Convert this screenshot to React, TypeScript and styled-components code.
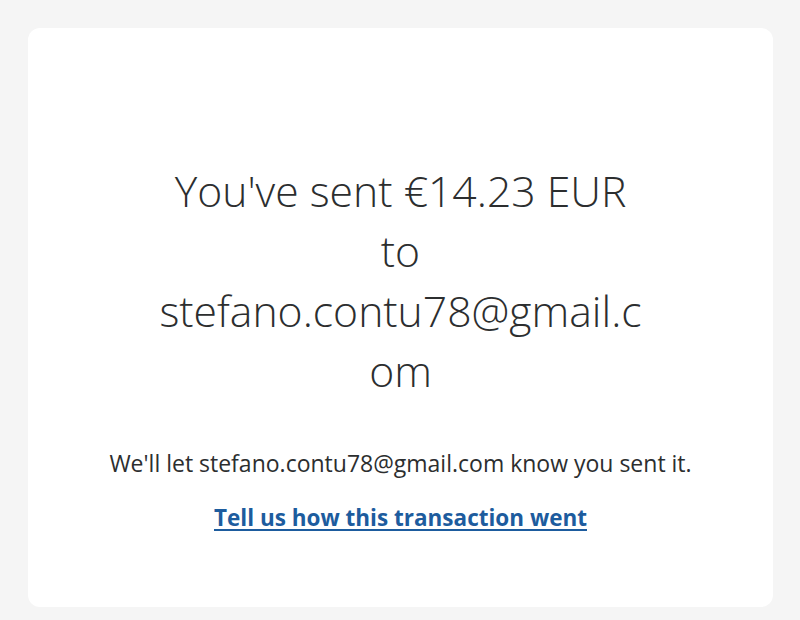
import React from 'react';
import styled, { createGlobalStyle } from 'styled-components';

const GlobalStyle = createGlobalStyle`
  html, body {
    margin: 0;
    padding: 0;
    background: #f5f5f5;
  }
  body {
    font-family: 'Open Sans', 'Noto Sans', sans-serif;
    color: #2c2e2f;
  }
`;

const Page = styled.div`
  padding: 28px 27px 13px 28px;
`;

const Card = styled.div`
  background: #ffffff;
  border-radius: 12px;
  height: 579px;
  box-sizing: border-box;
  padding-top: 133px;
  display: flex;
  flex-direction: column;
  align-items: center;
`;

const Heading = styled.h1`
  margin: 0;
  width: 490px;
  font-family: 'Open Sans', sans-serif;
  font-weight: 300;
  font-size: 42.7px;
  line-height: 60px;
  text-align: center;
  color: #2c2e2f;
  overflow-wrap: anywhere;
`;

const Note = styled.p`
  margin: 47px 0 0;
  font-family: 'Open Sans', 'Noto Sans', sans-serif;
  font-size: 23px;
  line-height: 30px;
  color: #2c2e2f;
  text-align: center;
`;

const FeedbackLink = styled.a`
  margin-top: 25px;
  font-family: 'Open Sans', 'Noto Sans', sans-serif;
  font-weight: 700;
  font-size: 22.5px;
  line-height: 30px;
  color: #1d5c9e;
  text-decoration: underline;
  text-underline-offset: 3px;
  cursor: pointer;
`;

const App: React.FC = () => {
  return (
    <Page>
      <GlobalStyle />
      <Card>
        <Heading>You've sent €14.23 EUR to stefano.contu78@gmail.com</Heading>
        <Note>We'll let stefano.contu78@gmail.com know you sent it.</Note>
        <FeedbackLink href="#">Tell us how this transaction went</FeedbackLink>
      </Card>
    </Page>
  );
};

export default App;
